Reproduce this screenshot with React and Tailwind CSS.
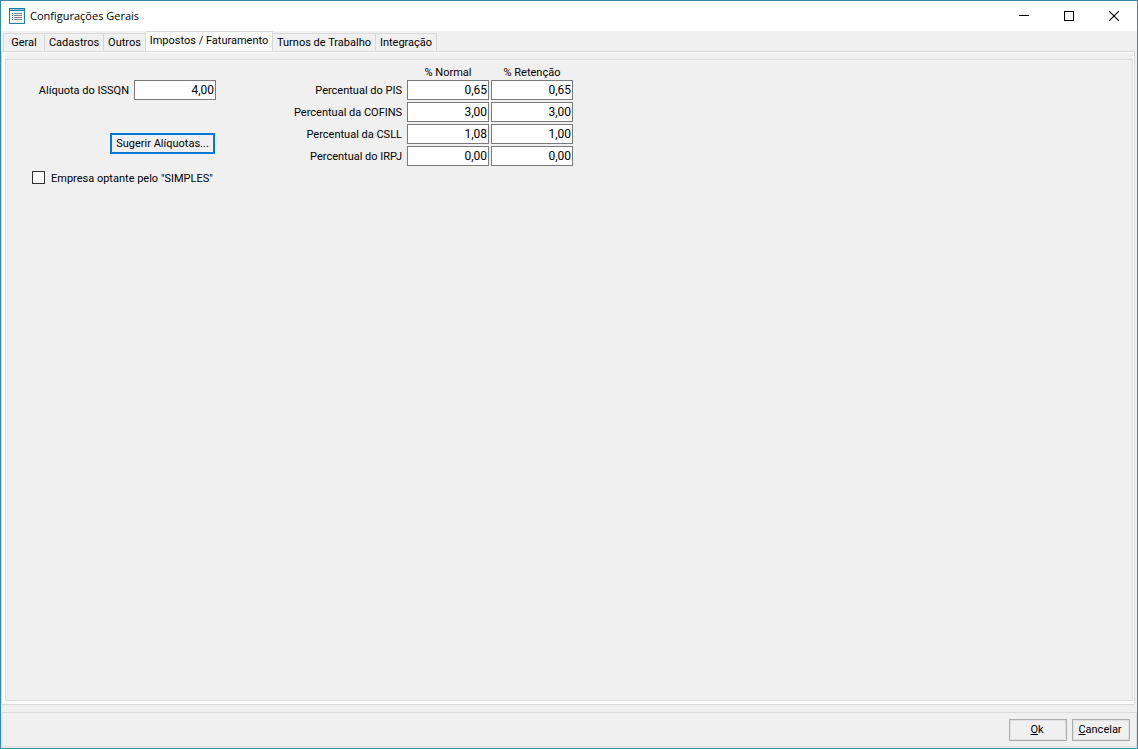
import { useState } from 'react';

const TABS = [
  { label: 'Geral', width: 'w-[42px]' },
  { label: 'Cadastros', width: 'w-[59px]' },
  { label: 'Outros', width: 'w-[42px]' },
  { label: 'Impostos / Faturamento', width: 'w-[127px]' },
  { label: 'Turnos de Trabalho', width: 'w-[103px]' },
  { label: 'Integração', width: 'w-[61px]' },
];

const TAXES = [
  { id: 'pis', label: 'Percentual do PIS', normal: '0,65', retencao: '0,65' },
  { id: 'cofins', label: 'Percentual da COFINS', normal: '3,00', retencao: '3,00' },
  { id: 'csll', label: 'Percentual da CSLL', normal: '1,08', retencao: '1,00' },
  { id: 'irpj', label: 'Percentual do IRPJ', normal: '0,00', retencao: '0,00' },
];

function NumberField({ id, value, label }) {
  return (
    <input
      id={id}
      type="text"
      inputMode="decimal"
      defaultValue={value}
      aria-label={label}
      className="h-5 w-[82px] border border-[#7a7a7a] bg-white pr-px text-right text-[12px] outline-none"
    />
  );
}

function TitleBar() {
  return (
    <header className="flex h-[30px] shrink-0 items-center bg-white pl-2">
      <svg width="16" height="16" viewBox="0 0 16 16" shapeRendering="crispEdges" aria-hidden="true">
        <rect width="16" height="16" fill="#1b7fae" />
        <rect x="1" y="1" width="14" height="1" fill="#8cc4de" />
        <rect x="1" y="3" width="14" height="12" fill="#f7fafc" />
        <path d="M3 5h1v1H3zM3 7h1v1H3zM3 9h1v1H3zM3 11h1v1H3z" fill="#2a6fd0" />
        <path d="M5 5h8v1H5zM5 7h8v1H5zM5 9h8v1H5zM5 11h8v1H5z" fill="#85858d" />
      </svg>
      <h1 className="ml-[5px] flex-1 font-['Open_Sans',sans-serif] text-[11px] leading-4">Configurações Gerais</h1>
      <button type="button" aria-label="Minimizar" className="flex h-full w-[45px] items-center justify-center">
        <svg width="10" height="10" shapeRendering="crispEdges">
          <path d="M0 4h10v1H0z" />
        </svg>
      </button>
      <button type="button" aria-label="Maximizar" className="flex h-full w-[45px] items-center justify-center">
        <svg width="10" height="10" fill="none" stroke="#000" shapeRendering="crispEdges">
          <path d="M.5 .5h9v9h-9z" />
        </svg>
      </button>
      <button type="button" aria-label="Fechar" className="flex h-full w-[46px] items-center justify-center">
        <svg width="10" height="10" fill="none" stroke="#000" strokeWidth="1.1">
          <path d="M0 0l10 10M10 0L0 10" />
        </svg>
      </button>
    </header>
  );
}

function Tabs({ active, onSelect }) {
  return (
    <div role="tablist" className="flex h-5 shrink-0 items-end pl-0.5">
      {TABS.map((tab, i) => (
        <button
          key={tab.label}
          type="button"
          role="tab"
          aria-selected={i === active}
          onClick={() => onSelect(i)}
          className={`${tab.width} shrink-0 border-t border-r border-[#d9d9d9] whitespace-nowrap first:border-l ${
            i === active ? 'h-5 bg-white pb-px' : 'h-[18px] bg-[#f0f0f0] pt-px'
          }`}
        >
          {tab.label}
        </button>
      ))}
    </div>
  );
}

function TaxPanel() {
  return (
    <div className="flex items-start gap-[78px] pt-1 pl-[26px]">
      <div className="flex w-[184px] flex-col pt-4">
        <div className="flex items-center justify-end gap-[5px]">
          <label htmlFor="issqn" className="pt-px">
            Alíquota do ISSQN
          </label>
          <NumberField id="issqn" value="4,00" />
        </div>
        <button
          type="button"
          className="mt-[33px] mr-px h-[21px] w-[105px] self-end border-2 border-[#0078d7] bg-[#f0f0f0] pt-px whitespace-nowrap"
        >
          Sugerir Alíquotas...
        </button>
        <label className="mt-4 flex items-start gap-1.5 whitespace-nowrap">
          <input
            type="checkbox"
            className="mt-px size-[13px] shrink-0 appearance-none border border-[#333] bg-white checked:bg-[#333]"
          />
          <span className="pt-px">Empresa optante pelo "SIMPLES"</span>
        </label>
      </div>

      <div className="grid grid-cols-[111px_82px_82px] items-center gap-0.5">
        <span />
        <span className="h-3.5 pt-px text-center">% Normal</span>
        <span className="h-3.5 pt-px text-center">% Retenção</span>
        {TAXES.map((tax) => (
          <div key={tax.id} className="contents">
            <label htmlFor={tax.id} className="pt-px pr-[3px] text-right whitespace-nowrap">
              {tax.label}
            </label>
            <NumberField id={tax.id} value={tax.normal} />
            <NumberField value={tax.retencao} label={`${tax.label} - Retenção`} />
          </div>
        ))}
      </div>
    </div>
  );
}

export default function App() {
  const [active, setActive] = useState(3);

  return (
    <div className="flex h-screen flex-col border border-[#3d87a5] bg-[#f0f0f0] font-[Roboto,Arial,sans-serif] text-[11px] leading-4 text-black">
      <TitleBar />
      <Tabs active={active} onSelect={setActive} />

      <main className="mr-0.5 flex flex-1 flex-col border border-[#d9d9d9] bg-white pt-px pr-px pb-[3px] pl-[3px]">
        <div className="flex flex-1 flex-col bg-[#f0f0f0] pt-1.5">
          <section className="flex-1 border border-[#dcdcdc]">{active === 3 && <TaxPanel />}</section>
        </div>
      </main>

      <footer className="mt-[7px] mb-px flex h-[35px] shrink-0 items-center justify-end gap-[5px] border border-[#dcdcdc] pr-1.5">
        <button type="button" className="h-[22px] w-[58px] border border-[#adadad] bg-[#f0f0f0] pr-0.5 outline-1 -outline-offset-2 outline-[#e1e1e1]">
          <u>O</u>k
        </button>
        <button type="button" className="h-[22px] w-[58px] border border-[#adadad] bg-[#f0f0f0] pr-0.5 outline-1 -outline-offset-2 outline-[#e1e1e1]">
          <u>C</u>ancelar
        </button>
      </footer>
    </div>
  );
}
